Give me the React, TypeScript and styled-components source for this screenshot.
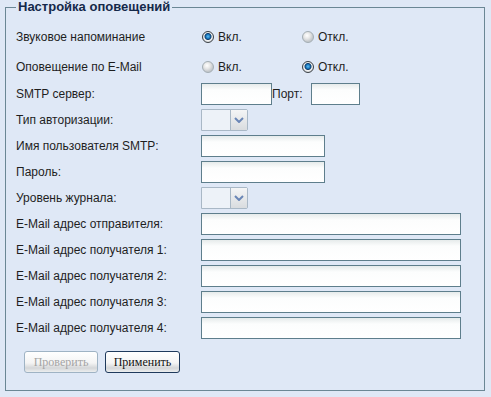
import styled, { createGlobalStyle } from "styled-components";

const GlobalStyle = createGlobalStyle`
  html, body {
    margin: 0;
    padding: 0;
    background: #dfe8f6;
  }
  body {
    font-family: "Liberation Sans", Arial, sans-serif;
    font-size: 12px;
    color: #1e1e1e;
  }
`;

const Page = styled.div`
  padding: 0 6px 0 5px;
  height: 397px;
  box-sizing: border-box;
`;

const Fieldset = styled.fieldset`
  margin: 0;
  padding: 8px 10px 17px 10px;
  border: 1px solid #6b8795;
  min-width: 0;
`;

const Legend = styled.legend`
  padding: 0 2px;
  font-size: 13px;
  font-weight: bold;
  line-height: 14px;
  color: #15294a;
`;

const Row = styled.div<{ $h?: number }>`
  display: flex;
  align-items: center;
  height: ${(p) => p.$h ?? 26}px;
`;

const Label = styled.div`
  width: 185px;
  flex-shrink: 0;
  white-space: nowrap;
`;

const RadioOption = styled.label`
  display: flex;
  align-items: center;
  width: 99px;
  margin-left: 1px;
  gap: 4px;
  cursor: pointer;
`;

const RadioDot = styled.span<{ $on?: boolean }>`
  width: 12px;
  height: 12px;
  box-sizing: border-box;
  border-radius: 50%;
  border: 1px solid ${(p) => (p.$on ? "#3a3f44" : "#a3adb3")};
  background: ${(p) =>
    p.$on
      ? "radial-gradient(circle at 50% 45%, #5fc0f0 0, #1a78c0 2px, #0b3d6e 3px, #f2f2f2 4px, #c8ccd0 6px)"
      : "radial-gradient(circle at 40% 35%, #ffffff 0, #e8e8e8 3px, #c4c8cc 6px)"};
  flex-shrink: 0;
`;

const TextInput = styled.input<{ $w: number }>`
  width: ${(p) => p.$w}px;
  height: 22px;
  box-sizing: border-box;
  margin: 0;
  border: 1px solid #5e7e8c;
  background: linear-gradient(#e6ebeb 0, #fcfdfd 6px, #ffffff 100%);
  padding: 0 3px;
  font: inherit;
  outline: none;
`;

const PortLabel = styled.span`
  margin: 0 8px 0 0;
`;

const SelectBox = styled.div`
  display: flex;
  width: 47px;
  height: 22px;
  box-sizing: border-box;
  border: 1px solid #a9b8c6;
  border-radius: 0 2px 2px 0;
  background: #edf2f8;
`;

const SelectValue = styled.div`
  flex: 1;
  border-right: 1px solid #a9b8c6;
`;

const SelectArrow = styled.div`
  width: 16px;
  display: flex;
  align-items: center;
  justify-content: center;
  background: linear-gradient(#f4f5f6, #d9dcdf);
`;

const Buttons = styled.div`
  display: flex;
  gap: 7px;
  margin: 10px 0 0 8px;
`;

const Button = styled.button<{ $disabled?: boolean }>`
  width: ${(p) => (p.$disabled ? 74 : 75)}px;
  height: 22px;
  margin: 0;
  padding: 0;
  border-radius: 3px;
  border: 1px solid ${(p) => (p.$disabled ? "#9fb3c4" : "#1f3a5c")};
  background: linear-gradient(#ffffff 0, #f4f4f4 55%, #d4d6d8 80%, #eceeef 100%);
  font-family: "Liberation Serif", "Times New Roman", serif;
  font-size: 12px;
  color: ${(p) => (p.$disabled ? "#a4a4a4" : "#111")};
  cursor: ${(p) => (p.$disabled ? "default" : "pointer")};
`;

const Chevron = () => (
  <svg width="10" height="6" viewBox="0 0 10 6">
    <path d="M1 1 L5 5 L9 1" fill="none" stroke="#6a86b6" strokeWidth="2" />
  </svg>
);

const Select = () => (
  <SelectBox>
    <SelectValue />
    <SelectArrow>
      <Chevron />
    </SelectArrow>
  </SelectBox>
);

const RadioPair = ({ on }: { on: "yes" | "no" }) => (
  <>
    <RadioOption>
      <RadioDot $on={on === "yes"} />
      Вкл.
    </RadioOption>
    <RadioOption>
      <RadioDot $on={on === "no"} />
      Откл.
    </RadioOption>
  </>
);

const emails = [
  "E-Mail адрес отправителя:",
  "E-Mail адрес получателя 1:",
  "E-Mail адрес получателя 2:",
  "E-Mail адрес получателя 3:",
  "E-Mail адрес получателя 4:",
];

export default function App() {
  return (
    <Page>
      <GlobalStyle />
      <Fieldset>
        <Legend>Настройка оповещений</Legend>
        <Row $h={30}>
          <Label>Звуковое напоминание</Label>
          <RadioPair on="yes" />
        </Row>
        <Row $h={29}>
          <Label>Оповещение по E-Mail</Label>
          <RadioPair on="no" />
        </Row>
        <Row>
          <Label>SMTP сервер:</Label>
          <TextInput $w={71} />
          <PortLabel>Порт:</PortLabel>
          <TextInput $w={49} />
        </Row>
        <Row>
          <Label>Тип авторизации:</Label>
          <Select />
        </Row>
        <Row>
          <Label>Имя пользователя SMTP:</Label>
          <TextInput $w={124} />
        </Row>
        <Row>
          <Label>Пароль:</Label>
          <TextInput $w={124} type="password" />
        </Row>
        <Row>
          <Label>Уровень журнала:</Label>
          <Select />
        </Row>
        {emails.map((e) => (
          <Row key={e}>
            <Label>{e}</Label>
            <TextInput $w={260} />
          </Row>
        ))}
        <Buttons>
          <Button $disabled disabled>
            Проверить
          </Button>
          <Button>Применить</Button>
        </Buttons>
      </Fieldset>
    </Page>
  );
}
